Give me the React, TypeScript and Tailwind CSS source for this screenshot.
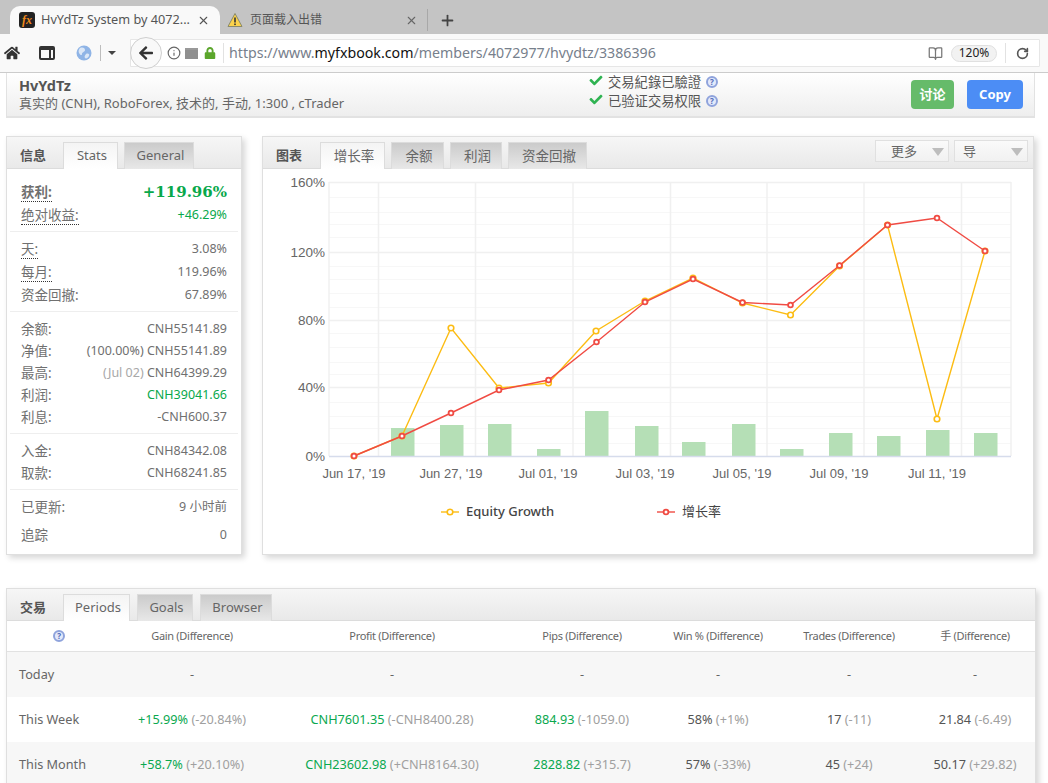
import { BookOpen, Info, Plus, RotateCw, X } from 'lucide-react'
import { FaArrowLeft, FaCheck, FaHome, FaLock } from 'react-icons/fa'

const redPoints: [number, number][] = [
  [354, 456], [402, 436], [451, 413], [499, 390], [548.5, 380], [596.5, 342], [645, 302],
  [693, 279], [742.5, 302.5], [790.5, 305], [839.5, 265.5], [887.5, 225], [937, 218], [985, 251],
]

const yellowPoints: [number, number][] = [
  [354, 456], [402, 436], [451, 328], [499, 388], [548.5, 383], [596, 331], [645, 301],
  [693, 278], [742.5, 303], [790.5, 315], [839.5, 266], [887.5, 225], [937, 419], [985, 251],
]

const bars = [
  [391, 428], [440, 425], [488, 424], [537, 449], [585, 411], [635, 426], [682, 442],
  [732, 424], [780, 449], [829, 433], [877, 436], [926, 430], [974, 433],
]

const minorLines = [197, 212, 224, 237, 266, 279, 293, 307, 333, 347, 362, 374, 402, 416, 428, 443]
const majorLines = [
  { y: 182, label: '160%' },
  { y: 252, label: '120%' },
  { y: 320, label: '80%' },
  { y: 387, label: '40%' },
  { y: 456, label: '0%' },
]
const gridX = [378.5, 475.5, 573, 670.5, 767, 864, 961.5]
const dateLabels = [
  { x: 354, label: "Jun 17, '19" },
  { x: 451, label: "Jun 27, '19" },
  { x: 548, label: "Jul 01, '19" },
  { x: 645, label: "Jul 03, '19" },
  { x: 742, label: "Jul 05, '19" },
  { x: 839, label: "Jul 09, '19" },
  { x: 937, label: "Jul 11, '19" },
]

const tableGrid = 'grid grid-cols-[104px_162px_238px_142px_130px_132px_120px] items-center text-center'

function HelpDot() {
  return (
    <span className="inline-flex h-[12px] w-[12px] items-center justify-center rounded-full border-2 border-[#8fa3dc] bg-[#e3e9fa] text-[8px] font-bold leading-none text-[#4f69b8]">
      ?
    </span>
  )
}

function PanelTab({ label, active, className }: { label: string; active?: boolean; className: string }) {
  return (
    <div
      className={
        active
          ? `-mb-px flex h-[27px] items-center justify-center border border-b-0 border-[#dcdcdc] bg-gradient-to-b from-[#f4f4f4] to-white pl-[3px] text-[#666] ${className}`
          : `-mb-px flex h-[27px] items-center justify-center border border-b-0 border-[#dcdcdc] bg-gradient-to-b from-[#cbcbcb] to-[#e8e8e8] pl-[3px] text-[#666] ${className}`
      }
    >
      {label}
    </div>
  )
}

function PanelHeader({ children }: { children: React.ReactNode }) {
  return (
    <div className="flex h-[32px] items-end border-b border-[#dcdcdc] bg-gradient-to-b from-[#f6f6f6] to-[#e9e9e9]">
      {children}
    </div>
  )
}

function StatRow({
  label,
  dotted,
  note,
  noteClass = 'text-[#707070]',
  value,
  className = 'h-[22px]',
  valueClass = 'text-[#707070]',
}: {
  label: string
  dotted?: boolean
  note?: string
  noteClass?: string
  value: string
  className?: string
  valueClass?: string
}) {
  return (
    <div className={`flex items-center justify-between pl-[13px] pr-[13px] text-[12.5px] ${className}`}>
      <span className={dotted ? 'border-b border-dotted border-[#333] text-[13.5px] leading-[17px] text-[#707070]' : 'text-[13.5px] text-[#707070]'}>
        {label}
      </span>
      <span className={valueClass}>
        {note && <span className={noteClass}>{note} </span>}
        {value}
      </span>
    </div>
  )
}

function Divider({ className }: { className: string }) {
  return <div className={`mx-[2px] border-t border-[#eeeeee] ${className}`} />
}

function Dropdown({ label, className }: { label: string; className: string }) {
  return (
    <div className={`flex h-[22px] items-center justify-between border border-[#e0e0e0] bg-gradient-to-b from-[#fafafa] to-[#f1f1f1] pr-[4px] pt-[1px] text-[13px] text-[#666] ${className}`}>
      <span>{label}</span>
      <span className="h-0 w-0 border-x-[6px] border-t-[8px] border-x-transparent border-t-[#bdbdbd]" />
    </div>
  )
}

function Chart() {
  const toLine = (pts: [number, number][]) => pts.map((p) => p.join(',')).join(' ')
  return (
    <svg viewBox="263 169 770 385" className="block h-[385px] w-[770px]">
      <g stroke="#f7f7f7" strokeWidth="1">
        {minorLines.map((y) => (
          <line key={y} x1="329" x2="1011" y1={y + 0.5} y2={y + 0.5} />
        ))}
      </g>
      <g stroke="#f0f0f0" strokeWidth="1.5">
        {gridX.concat(329, 1011).map((x) => (
          <line key={x} x1={x} x2={x} y1="182" y2="456" />
        ))}
        {majorLines.slice(0, 4).map((l) => (
          <line key={l.y} x1="329" x2="1011" y1={l.y + 0.5} y2={l.y + 0.5} />
        ))}
      </g>
      <g fontFamily="'Liberation Sans', sans-serif" fill="#666">
        {majorLines.map((l) => (
          <text key={l.label} x="325" y={l.y + 5} textAnchor="end" fontSize="13.5">
            {l.label}
          </text>
        ))}
        {dateLabels.map((d) => (
          <text key={d.label} x={d.x} y="478" textAnchor="middle" fontSize="13">
            {d.label}
          </text>
        ))}
      </g>
      {bars.map(([x, top]) => (
        <rect key={x} x={x} y={top} width="23.5" height={456 - top} fill="#b5dfb6" />
      ))}
      <line x1="329" x2="1011" y1="456.5" y2="456.5" stroke="#d6dcec" strokeWidth="1.5" />
      <polyline points={toLine(yellowPoints)} fill="none" stroke="#fcbc13" strokeWidth="1.4" />
      {yellowPoints.map(([x, y]) => (
        <circle key={x} cx={x} cy={y} r="2.8" fill="#fff" stroke="#fcbc13" strokeWidth="1.6" />
      ))}
      <polyline points={toLine(redPoints)} fill="none" stroke="#f04b43" strokeWidth="1.4" />
      {redPoints.map(([x, y]) => (
        <circle key={x} cx={x} cy={y} r="2.4" fill="#fff" stroke="#f04b43" strokeWidth="1.8" />
      ))}
      <line x1="441" x2="459" y1="512" y2="512" stroke="#fcbc13" strokeWidth="1.4" />
      <circle cx="450" cy="512" r="2.8" fill="#fff" stroke="#fcbc13" strokeWidth="1.6" />
      <text x="466" y="516" fontSize="13" fontWeight="500" fill="#444" fontFamily="'Noto Sans', sans-serif">
        Equity Growth
      </text>
      <line x1="657" x2="675" y1="512" y2="512" stroke="#f04b43" strokeWidth="1.4" />
      <circle cx="666" cy="512" r="2.4" fill="#fff" stroke="#f04b43" strokeWidth="1.8" />
      <text x="682" y="516" fontSize="13" fill="#444" fontFamily="'Noto Sans CJK SC', sans-serif">
        增长率
      </text>
    </svg>
  )
}

function Cell({ main, diff, green }: { main: string; diff: string; green?: boolean }) {
  return (
    <div>
      <span className={green ? 'text-[#0aa84f]' : 'text-[#555]'}>{main}</span>{' '}
      <span className="text-[#a0a0a0]">{diff}</span>
    </div>
  )
}

export default function App() {
  return (
    <div className="h-[783px] w-[1048px] overflow-hidden bg-white font-['Noto_Sans','Noto_Sans_CJK_SC',sans-serif] text-[13px] text-[#666]">
      {/* browser tabs */}
      <div className="flex h-[34px] items-end bg-[#c4c4c4]">
        <div className="ml-[10px] flex h-[28px] w-[210px] items-center rounded-t-[10px] bg-[#f9f9f9] pl-[9px] pr-[10px]">
          <span className="flex h-[16px] w-[16px] items-center justify-center rounded-[3px] bg-[#222] font-['Liberation_Serif',serif] text-[12px] font-bold italic leading-none text-[#f08a1d]">
            fx
          </span>
          <span className="ml-[6px] flex-1 whitespace-nowrap text-[12.7px] text-[#555]">HvYdTz System by 4072...</span>
          <X className="h-[13px] w-[13px] text-[#555]" />
        </div>
        <div className="flex h-[28px] w-[210px] items-center pl-[7px] pr-[2px]">
          <svg viewBox="0 0 16 16" className="h-[16px] w-[16px]">
            <path d="M8 1.5 15 14.5H1Z" fill="#fbd24b" stroke="#8a8a6a" strokeWidth="1" />
            <rect x="7.2" y="5.5" width="1.6" height="5" fill="#333" />
            <rect x="7.2" y="11.5" width="1.6" height="1.6" fill="#333" />
          </svg>
          <span className="ml-[7px] flex-1 text-[12px] text-[#555]">页面载入出错</span>
          <X className="h-[13px] w-[13px] text-[#666]" />
          <span className="ml-[9px] h-[22px] border-l border-[#a8a8a8]" />
        </div>
        <Plus className="mb-[5px] ml-[9px] h-[17px] w-[17px] text-[#444]" strokeWidth={2.5} />
      </div>

      {/* browser toolbar */}
      <div className="flex h-[39px] items-center border-b border-[#cccccc] bg-[#f9f9f9]">
        <FaHome className="ml-[4px] h-[16px] w-[16px] text-[#333]" />
        <svg viewBox="0 0 16 16" className="ml-[19px] h-[16px] w-[16px]">
          <rect x="1" y="2" width="14" height="12" rx="1" fill="none" stroke="#333" strokeWidth="2" />
          <rect x="1" y="2" width="14" height="3" fill="#333" />
          <rect x="10" y="2" width="2" height="12" fill="#333" />
        </svg>
        <svg viewBox="0 0 16 16" className="ml-[21px] h-[16px] w-[16px]">
          <circle cx="8" cy="8" r="7.5" fill="#8fb4e6" />
          <path d="M4 3c3-1 5 0 5 2s-3 2-3 4-2 1-3-1 0-4 1-5ZM10 9c2-1 4 0 3 2s-3 3-4 2 0-3 1-4Z" fill="#dbe7f7" />
        </svg>
        <span className="ml-[8px] h-[16px] border-l border-[#bdbdbd]" />
        <span className="ml-[7px] h-0 w-0 border-x-[4px] border-t-[4px] border-x-transparent border-t-[#444]" />
        <div className="ml-[14px] mr-[8px] flex h-[28px] flex-1 items-center rounded-r-[1px] border border-[#e6e6e6] bg-white pr-[10px]">
          <span className="-ml-[1px] flex h-[32px] w-[32px] items-center justify-center rounded-full border border-[#cfcfcf] bg-[#f9f9f9]">
            <FaArrowLeft className="h-[16px] w-[16px] text-[#333]" />
          </span>
          <Info className="ml-[5px] h-[14px] w-[14px] text-[#666]" />
          <span className="ml-[4px] h-[11px] w-[13px] border-t-2 border-[#999] bg-[#8f8f8f]" />
          <FaLock className="ml-[6px] h-[12px] w-[12px] text-[#5ba62c]" />
          <span className="ml-[7px] h-[20px] border-l border-[#e2e2e2]" />
          <span className="ml-[5px] flex-1 whitespace-nowrap font-['Noto_Sans',sans-serif] text-[14.2px] text-[#77808c]">
            https://www.<span className="text-[#111]">myfxbook.com</span>/members/4072977/hvydtz/3386396
          </span>
          <BookOpen className="h-[15px] w-[15px] text-[#777]" />
          <span className="ml-[8px] flex h-[17px] w-[46px] items-center justify-center rounded-full border border-[#e0e0e0] bg-[#f2f2f2] text-[12px] text-[#222]">
            120%
          </span>
          <span className="ml-[8px] h-[20px] border-l border-[#e2e2e2]" />
          <RotateCw className="ml-[10px] h-[13px] w-[13px] text-[#555]" strokeWidth={3} />
        </div>
      </div>

      {/* account header */}
      <div className="ml-[6px] flex h-[45px] w-[1029px] items-center border-x border-b-2 border-[#e2e2e2] bg-gradient-to-b from-white to-[#eeeeee]">
        <div className="mb-[2px] ml-[12px] w-[570px]">
          <div className="text-[14.5px] font-bold leading-[20px] text-[#555]">HvYdTz</div>
          <div className="text-[13px] leading-[17px] text-[#666]">真实的 (CNH), RoboForex, 技术的, 手动, 1:300 , cTrader</div>
        </div>
        <div className="mb-[6px] w-[322px] text-[13.3px] leading-[19px] text-[#555]">
          <div className="flex items-center">
            <FaCheck className="-mt-[3px] h-[13px] w-[14px] text-[#2fb352]" />
            <span className="ml-[5px] w-[98px]">交易紀錄已驗證</span>
            <HelpDot />
          </div>
          <div className="flex items-center">
            <FaCheck className="-mt-[3px] h-[13px] w-[14px] text-[#2fb352]" />
            <span className="ml-[5px] w-[98px]">已验证交易权限</span>
            <HelpDot />
          </div>
        </div>
        <div className="flex h-[29px] w-[43px] items-center justify-center rounded-[4px] bg-[#66bb6a] text-[13px] font-bold text-white">
          讨论
        </div>
        <div className="ml-[13px] flex h-[29px] w-[56px] items-center justify-center rounded-[4px] bg-[#4c8df5] text-[13px] font-bold text-white">
          Copy
        </div>
      </div>

      <div className="ml-[6px] mt-[18px] flex h-[419px] gap-[20px]">
        {/* info panel */}
        <div className="h-full w-[236px] border border-[#dfdfdf] shadow-[3px_3px_6px_rgba(0,0,0,0.16)]">
          <PanelHeader>
            <span className="mb-[3px] ml-[13px] w-[43px] text-[13px] font-bold text-[#555]">信息</span>
            <PanelTab label="Stats" active className="w-[55px]" />
            <PanelTab label="General" className="ml-[6px] w-[70px]" />
          </PanelHeader>
          <div className="px-[1px] pt-[12px]">
            <StatRow
              label="获利:"
              dotted
              value="+119.96%"
              className="h-[23px] font-bold"
              valueClass="font-['DejaVu_Serif',serif] text-[15px] text-[#08a84b]"
            />
            <StatRow label="绝对收益:" dotted value="+46.29%" className="h-[23px]" valueClass="text-[#08a84b]" />
            <Divider className="mb-[6px] mt-[4px]" />
            <StatRow label="天:" dotted value="3.08%" className="h-[23px]" />
            <StatRow label="每月:" dotted value="119.96%" className="h-[23px]" />
            <StatRow label="资金回撤:" value="67.89%" className="h-[23px]" />
            <Divider className="mb-[6px] mt-[4px]" />
            <StatRow label="余额:" value="CNH55141.89" />
            <StatRow label="净值:" note="(100.00%)" value="CNH55141.89" />
            <StatRow label="最高:" note="(Jul 02)" noteClass="text-[#a8a8a8]" value="CNH64399.29" />
            <StatRow label="利润:" value="CNH39041.66" valueClass="text-[#08a84b]" />
            <StatRow label="利息:" value="-CNH600.37" />
            <Divider className="mb-[6px] mt-[5px]" />
            <StatRow label="入金:" value="CNH84342.08" />
            <StatRow label="取款:" value="CNH68241.85" />
            <Divider className="mb-[6px] mt-[5px]" />
            <StatRow label="已更新:" value="9 小时前" />
            <StatRow label="追踪" value="0" className="h-[34px]" />
          </div>
        </div>

        {/* chart panel */}
        <div className="h-full w-[772px] border border-[#dfdfdf] shadow-[3px_3px_6px_rgba(0,0,0,0.16)]">
          <PanelHeader>
            <span className="mb-[3px] ml-[13px] w-[44px] text-[13px] font-bold text-[#555]">图表</span>
            <PanelTab label="增长率" active className="w-[65px] text-[13.5px]" />
            <PanelTab label="余额" className="ml-[6px] w-[53px] text-[13.5px]" />
            <PanelTab label="利润" className="ml-[6px] w-[52px] text-[13.5px]" />
            <PanelTab label="资金回撤" className="ml-[6px] w-[79px] text-[13.5px]" />
            <div className="mb-[6px] ml-auto mr-[5px] flex gap-[5px]">
              <Dropdown label="更多" className="w-[74px] pl-[15px]" />
              <Dropdown label="导" className="w-[74px] pl-[8px]" />
            </div>
          </PanelHeader>
          <Chart />
        </div>
      </div>

      {/* trading panel */}
      <div className="ml-[6px] mt-[33px] w-[1030px] border border-[#dfdfdf] shadow-[3px_3px_6px_rgba(0,0,0,0.16)]">
        <PanelHeader>
          <span className="mb-[3px] ml-[13px] w-[43px] text-[13px] font-bold text-[#555]">交易</span>
          <PanelTab label="Periods" active className="w-[67px]" />
          <PanelTab label="Goals" className="ml-[7px] w-[56px]" />
          <PanelTab label="Browser" className="ml-[7px] w-[72px]" />
        </PanelHeader>
        <div className={`${tableGrid} h-[31px] border-b border-[#e2e2e2] text-[11px] tracking-[-0.3px] text-[#666]`}>
          <div className="flex justify-center">
            <HelpDot />
          </div>
          <div>Gain (Difference)</div>
          <div>Profit (Difference)</div>
          <div>Pips (Difference)</div>
          <div>Win % (Difference)</div>
          <div>Trades (Difference)</div>
          <div>手 (Difference)</div>
        </div>
        <div className={`${tableGrid} h-[45px] bg-[#f7f7f7] pt-[1px] text-[12.7px]`}>
          <div className="pl-[12px] text-left">Today</div>
          <div>-</div>
          <div>-</div>
          <div>-</div>
          <div>-</div>
          <div>-</div>
          <div>-</div>
        </div>
        <div className={`${tableGrid} h-[45px] bg-white pt-[1px] text-[12.7px]`}>
          <div className="pl-[12px] text-left">This Week</div>
          <Cell main="+15.99%" diff="(-20.84%)" green />
          <Cell main="CNH7601.35" diff="(-CNH8400.28)" green />
          <Cell main="884.93" diff="(-1059.0)" green />
          <Cell main="58%" diff="(+1%)" />
          <Cell main="17" diff="(-11)" />
          <Cell main="21.84" diff="(-6.49)" />
        </div>
        <div className={`${tableGrid} h-[45px] bg-[#f7f7f7] pt-[1px] text-[12.7px]`}>
          <div className="pl-[12px] text-left">This Month</div>
          <Cell main="+58.7%" diff="(+20.10%)" green />
          <Cell main="CNH23602.98" diff="(+CNH8164.30)" green />
          <Cell main="2828.82" diff="(+315.7)" green />
          <Cell main="57%" diff="(-33%)" />
          <Cell main="45" diff="(+24)" />
          <Cell main="50.17" diff="(+29.82)" />
        </div>
      </div>
    </div>
  )
}
